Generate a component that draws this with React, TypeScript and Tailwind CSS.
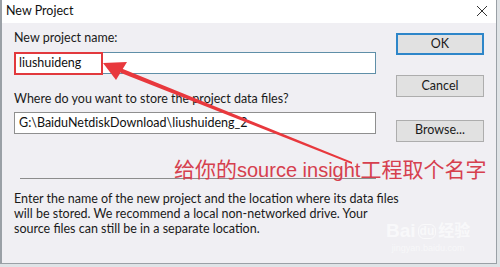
import React from 'react'

const ui = { fontFamily: 'Lato, "Noto Sans", sans-serif' }

function Btn({ label, primary }: { label: string; primary?: boolean }) {
  return (
    <button
      type="button"
      className={`h-[22px] w-[88px] bg-[#e1e1e1] text-[12.5px] text-[#1a1a1a] leading-none ${
        primary ? 'border-2 border-[#2e86c9]' : 'border border-[#adadad]'
      }`}
    >
      {label}
    </button>
  )
}

function Arrow() {
  // tip at (103,63), tail at (352,163)
  return (
    <svg className="pointer-events-none absolute inset-0" width={500} height={267}>
      <polygon points="118,67 121,73 352,164 352,162" fill="#e8383d" />
      <polygon points="103,63 127,62 116,80" fill="#e8383d" />
    </svg>
  )
}

export default function App() {
  return (
    <div className="relative h-[267px] w-[500px] overflow-hidden bg-[#dfe3e6]" style={ui}>
      <div className="flex h-[264px] w-[497px] flex-col border-l-2 border-r border-b border-[#9aa0a6] bg-[#f0eff3]">
        {/* title bar */}
        <div className="flex h-[23px] shrink-0 items-center justify-between bg-white pl-[4px] pr-[8px]">
          <span className="text-[12.5px] text-[#111]">New Project</span>
          <svg width="12" height="12" viewBox="0 0 12 12" className="mb-[1px]">
            <path d="M1 1 L11 11 M11 1 L1 11" stroke="#333" strokeWidth="1" />
          </svg>
        </div>

        <div className="flex gap-[20px] pl-[12px]">
          {/* left column */}
          <div className="flex w-[362px] flex-col">
            <div className="mt-[7px] h-[16px] text-[12.5px] leading-[16px] text-[#1a1a1a]">New project name:</div>
            <div className="relative mt-[6px] flex h-[22px] items-center border border-[#5f8fa8] bg-white pl-[4px] text-[12.5px] text-[#111]">
              liushuideng
              <div className="absolute left-[-1px] top-[-1px] h-[23px] w-[89px] border-2 border-[#e2393d]" />
            </div>
            <div className="mt-[17px] h-[16px] text-[12.5px] leading-[16px] text-[#1a1a1a]">
              Where do you want to store the project data files?
            </div>
            <div className="mt-[5px] flex h-[22px] items-center border border-[#8f8f8f] bg-white pl-[4px] text-[12.5px] text-[#111]">
              G:\BaiduNetdiskDownload\liushuideng_2
            </div>
            <div className="ml-[6px] mt-[44px] h-px w-[356px] bg-[#8c8c8c]" />
            <p className="mt-[12px] whitespace-nowrap text-[12.5px] leading-[15px] text-[#1a1a1a]">
              Enter the name of the new project and the location where its data files
              <br />
              will be stored. We recommend a local non-networked drive. Your
              <br />
              source files can still be in a separate location.
            </p>
          </div>

          {/* right column */}
          <div className="flex flex-col pt-[10px]">
            <Btn label="OK" primary />
            <div className="mt-[17px]">
              <Btn label="Cancel" />
            </div>
            <div className="mt-[19px]">
              <Btn label="Browse..." />
            </div>
          </div>
        </div>
      </div>

      {/* annotation */}
      <Arrow />
      <div
        className="absolute left-[174px] top-[157px] whitespace-nowrap text-[21px] leading-[26px] text-[#d6404e]"
        style={{ fontFamily: '"Liberation Sans", "Noto Sans CJK SC", sans-serif' }}
      >
        给你的<span className="text-[20px]">source insight</span>工程取个名字
      </div>

      {/* watermark */}
      <div className="absolute left-[386px] top-[220px] flex flex-col items-center text-white/60">
        <div className="flex items-center gap-[2px] text-[19px] font-bold leading-[22px]" style={{ fontFamily: '"Liberation Sans", "Noto Sans CJK SC", sans-serif' }}>
          Bai<span className="rounded-[6px] border border-white/60 px-[1px] text-[12px] leading-[13px]">du</span>
          <span className="text-[16px]">经验</span>
        </div>
        <div className="text-[9px] leading-[12px] text-white/50" style={{ fontFamily: '"Liberation Sans", sans-serif' }}>
          jingyan.baidu.com
        </div>
      </div>
    </div>
  )
}
